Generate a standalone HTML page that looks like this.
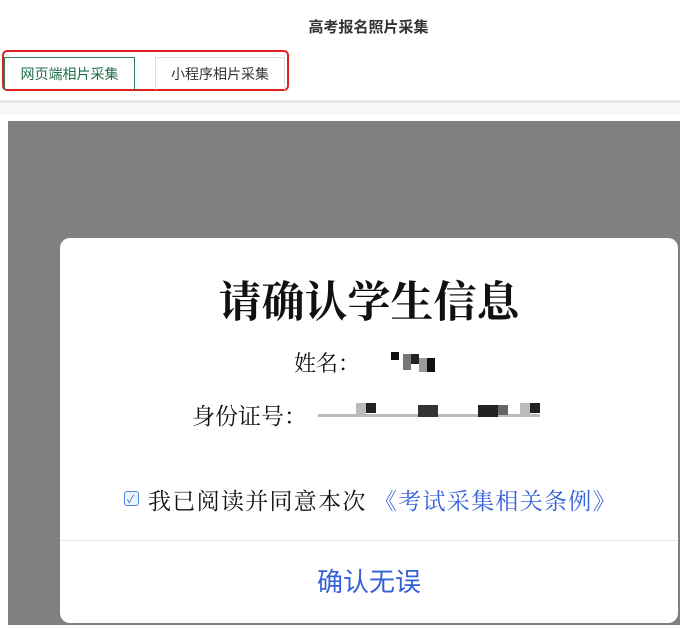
<!DOCTYPE html>
<html><head><meta charset="utf-8"><style>
*{margin:0;padding:0;box-sizing:border-box}
body{width:680px;height:628px;background:#fff;position:relative;overflow:hidden;font-family:"Liberation Sans","Noto Sans CJK SC",sans-serif}
.abs{position:absolute}
.serif{font-family:"Noto Serif CJK SC",serif}
</style></head><body>
<div class="abs" style="left:0;top:16px;width:737px;text-align:center;font-size:15px;font-weight:bold;color:#333">高考报名照片采集</div>
<div class="abs" style="left:2px;top:50px;width:287px;height:41px;border:2px solid #e02020;border-radius:5px"></div>
<div class="abs" style="left:4px;top:57px;width:131px;height:33px;border:1px solid #2e7d5a;border-bottom:none;color:#1f6e4a;font-size:14px;text-align:center;line-height:32px">网页端相片采集</div>
<div class="abs" style="left:155px;top:57px;width:130px;height:33px;border:1px solid #ddd;border-bottom:none;color:#333;font-size:14px;text-align:center;line-height:32px">小程序相片采集</div>
<div class="abs" style="left:0;top:100px;width:680px;height:3px;background:#e4e6e8"></div>
<div class="abs" style="left:0;top:103px;width:680px;height:12px;background:#f5f7f9"></div>
<div class="abs" style="left:8px;top:121px;width:672px;height:504px;background:#808080"></div>
<div class="abs" style="left:60px;top:238px;width:618px;height:385px;background:#fff;border-radius:10px"></div>
<div class="abs serif" style="left:60px;top:272px;width:618px;text-align:center;font-size:43px;font-weight:bold;color:#111;line-height:56px">请确认学生信息</div>
<div class="abs serif" style="left:294px;top:348px;font-size:22px;color:#111;line-height:30px">姓名：</div>
<div class="abs" style="left:365px;top:352px;width:80px;height:22px">
<div class="abs" style="left:26px;top:0;width:8px;height:8px;background:#111"></div>
<div class="abs" style="left:38px;top:2px;width:8px;height:16px;background:#777"></div>
<div class="abs" style="left:46px;top:2px;width:8px;height:10px;background:#222"></div>
<div class="abs" style="left:62px;top:6px;width:8px;height:14px;background:#111"></div>
<div class="abs" style="left:54px;top:6px;width:8px;height:14px;background:#999"></div>
</div>
<div class="abs serif" style="left:192px;top:400px;font-size:23px;color:#111;line-height:30px">身份证号：</div>
<div class="abs" style="left:318px;top:400px;width:230px;height:24px">
<div class="abs" style="left:0;top:14px;width:222px;height:3px;background:#bbb"></div>
<div class="abs" style="left:38px;top:3px;width:10px;height:14px;background:#bbb"></div>
<div class="abs" style="left:48px;top:3px;width:10px;height:10px;background:#222"></div>
<div class="abs" style="left:100px;top:5px;width:20px;height:12px;background:#333"></div>
<div class="abs" style="left:160px;top:5px;width:20px;height:12px;background:#222"></div>
<div class="abs" style="left:180px;top:5px;width:10px;height:10px;background:#666"></div>
<div class="abs" style="left:202px;top:3px;width:10px;height:14px;background:#bbb"></div>
<div class="abs" style="left:212px;top:3px;width:10px;height:10px;background:#222"></div>
</div>
<div class="abs" style="left:124px;top:491px;width:15px;height:15px;border:1.5px solid #4a86d8;border-radius:3px;background:#eef4fd"></div>
<div class="abs" style="left:127px;top:491px;font-size:11px;color:#3a70c8">✓</div>
<div class="abs serif" style="left:148px;top:484px;font-size:23px;letter-spacing:1.3px;color:#111;line-height:32px;white-space:nowrap">我已阅读并同意本次 <span style="color:#3561d8">《考试采集相关条例》</span></div>
<div class="abs" style="left:60px;top:540px;width:618px;height:1px;background:#e6e6e6"></div>
<div class="abs" style="left:60px;top:565px;width:618px;text-align:center;font-size:26px;color:#3561d8;line-height:34px">确认无误</div>
</body></html>
